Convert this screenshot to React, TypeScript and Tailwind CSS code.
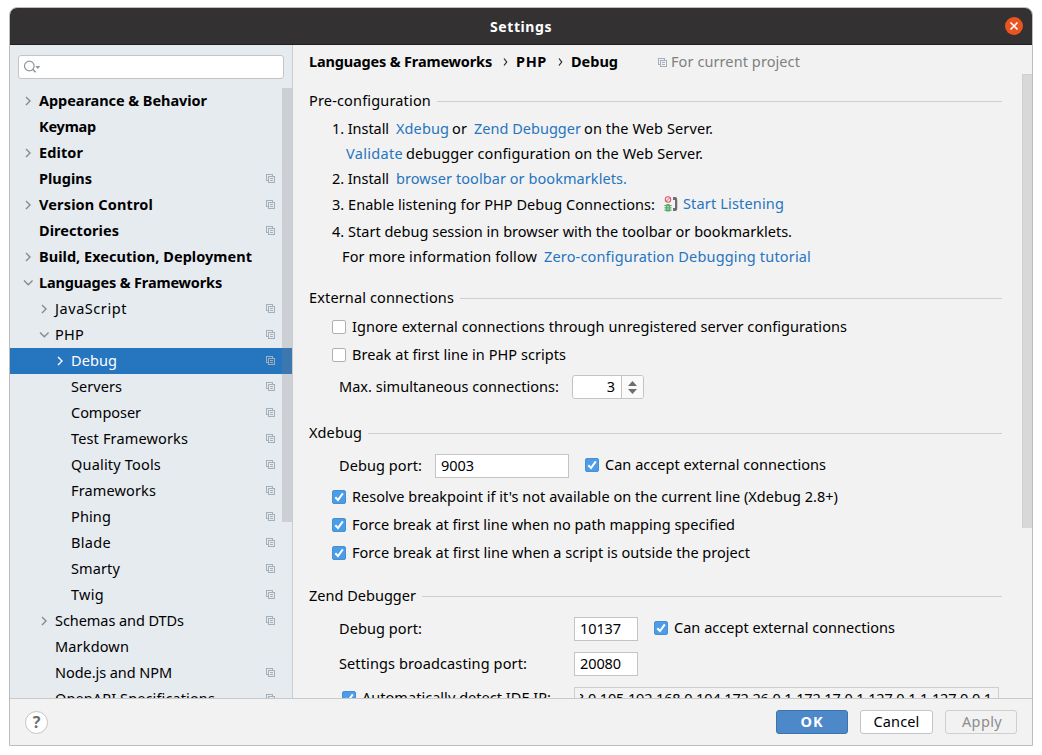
import { useLayoutEffect, useRef, useState } from 'react';
import type { ReactNode } from 'react';

/** Text tracked so that it spans exactly `w` pixels. */
function Fit({ w, children, className = 'pb-0.5' }: { w: number; children: string; className?: string }) {
  const ref = useRef<HTMLSpanElement>(null);
  const [tracking, setTracking] = useState(0);
  useLayoutEffect(() => {
    if (ref.current) {
      const natural = ref.current.getBoundingClientRect().width - tracking * children.length;
      setTracking((w - natural) / children.length);
    }
  }, [w, children]);
  return (
    <span ref={ref} className={`inline-block flex-none whitespace-pre ${className}`} style={{ letterSpacing: tracking }}>
      {children}
    </span>
  );
}

function ProjectIcon() {
  return (
    <svg width="9" height="9" viewBox="0 0 9 9" className="flex-none" fill="none" stroke="#a3b0b9" shapeRendering="crispEdges">
      <path d="M2 6.5H0.5V0.5H6.5V2" />
      <rect x="2.5" y="2.5" width="6" height="6" />
      <path d="M4 4.5H7M4 6.5H7" />
    </svg>
  );
}

function Arrow({ open, light }: { open?: boolean; light?: boolean }) {
  return (
    <svg width="10" height="10" viewBox="0 0 10 10" fill="none" stroke={light ? '#ffffff' : '#868a8c'} strokeWidth="1.4">
      <path d={open ? 'M1 2.5L5.3 6.8L9.6 2.5' : 'M3 1L7 5L3 9'} />
    </svg>
  );
}

type Node = { t: string; w: number; l: number; a?: 'r' | 'd'; p?: boolean; sel?: boolean };

const nodes: Node[] = [
  { t: 'Appearance & Behavior', w: 168, l: 0, a: 'r' },
  { t: 'Keymap', w: 57, l: 0 },
  { t: 'Editor', w: 44, l: 0, a: 'r' },
  { t: 'Plugins', w: 53, l: 0, p: true },
  { t: 'Version Control', w: 114, l: 0, a: 'r', p: true },
  { t: 'Directories', w: 80, l: 0, p: true },
  { t: 'Build, Execution, Deployment', w: 213, l: 0, a: 'r' },
  { t: 'Languages & Frameworks', w: 183, l: 0, a: 'd' },
  { t: 'JavaScript', w: 72, l: 1, a: 'r', p: true },
  { t: 'PHP', w: 29, l: 1, a: 'd', p: true },
  { t: 'Debug', w: 46, l: 2, a: 'r', p: true, sel: true },
  { t: 'Servers', w: 51, l: 2, p: true },
  { t: 'Composer', w: 70, l: 2, p: true },
  { t: 'Test Frameworks', w: 117, l: 2, p: true },
  { t: 'Quality Tools', w: 90, l: 2, p: true },
  { t: 'Frameworks', w: 85, l: 2, p: true },
  { t: 'Phing', w: 40, l: 2, p: true },
  { t: 'Blade', w: 40, l: 2, p: true },
  { t: 'Smarty', w: 49, l: 2, p: true },
  { t: 'Twig', w: 33, l: 2, p: true },
  { t: 'Schemas and DTDs', w: 129, l: 1, a: 'r', p: true },
  { t: 'Markdown', w: 74, l: 1 },
  { t: 'Node.js and NPM', w: 117, l: 1, p: true },
  { t: 'OpenAPI Specifications', w: 160, l: 1, p: true },
];

const indent = ['pl-[13px]', 'pl-[29px]', 'pl-[45px]'];

function TreeRow({ n }: { n: Node }) {
  return (
    <div className={`flex h-[26px] flex-none items-center pr-[17px] ${indent[n.l]} ${n.sel ? 'bg-[#2675bf] text-white' : ''}`}>
      <span className="flex w-4 flex-none">{n.a && <Arrow open={n.a === 'd'} light={n.sel} />}</span>
      <Fit w={n.w} className={n.l === 0 ? 'pb-0.5 font-bold' : 'pb-0.5'}>{n.t}</Fit>
      <span className="ml-auto flex pb-px">{n.p && <ProjectIcon />}</span>
    </div>
  );
}

function Section({ w, children, className = '' }: { w: number; children: string; className?: string }) {
  return (
    <div className={`flex h-[25px] flex-none items-center gap-1.5 pr-[30px] ${className}`}>
      <Fit w={w} className="pb-[3px]">{children}</Fit>
      <span className="h-px flex-1 bg-[#cfcfcf]" />
    </div>
  );
}

function Check({ on, w, children, className = '' }: { on?: boolean; w: number; children: string; className?: string }) {
  return (
    <label className={`flex flex-none items-center gap-1.5 ${className}`}>
      {on ? (
        <svg width="14" height="14" viewBox="0 0 14 14" className="flex-none">
          <rect x="0.5" y="0.5" width="13" height="13" rx="1.5" fill="#4d9de6" stroke="#4390d6" />
          <path d="M3.3 7.2L6 10L10.8 3.4" fill="none" stroke="#fff" strokeWidth="2" />
        </svg>
      ) : (
        <span className="size-3.5 flex-none rounded-[2px] border border-[#b0b0b0] bg-white" />
      )}
      <Fit w={w}>{children}</Fit>
    </label>
  );
}

function Link({ w, children }: { w: number; children: string }) {
  return <Fit w={w} className="pb-0.5 text-[#2675bf]">{children}</Fit>;
}

function Field({ w, children, className = '' }: { w: number; children: string; className?: string }) {
  return (
    <div className={`flex h-6 flex-none items-center border border-[#c4c4c4] bg-white pl-[5px] ${className}`}>
      <Fit w={w}>{children}</Fit>
    </div>
  );
}

function Line({ children, className = '' }: { children: ReactNode; className?: string }) {
  return <div className={`flex flex-none items-center ${className}`}>{children}</div>;
}

function ListenIcon() {
  return (
    <svg width="14" height="16" viewBox="0 0 14 16" className="flex-none" fill="none">
      <circle cx="4" cy="3.5" r="2.7" stroke="#e05565" strokeWidth="1.1" />
      <path d="M2.3 5.2L5.7 1.8" stroke="#e05565" />
      <path d="M2.5 8H5.5V9.5H6.3V14.2L5.5 15.4H2.5L1.7 14.2V9.5H2.5Z" fill="#59a869" />
      <path d="M0.3 9.5H7.7M0.3 11.8H7.7M0.3 14.2H7.7" stroke="#59a869" />
      <path d="M3 10.7H5M3 13H5" stroke="#f2f2f2" strokeWidth="0.7" />
      <path d="M9 1H12C13 2 13.3 3 13.3 4.5V11.5C13.3 13 13 14 12 15H9V12H11V4H9Z" fill="#6e6e6e" />
    </svg>
  );
}

export default function App() {
  return (
    <div className="h-[755px] w-[1042px] overflow-hidden bg-white pt-[7px] pl-[9px] font-['Noto_Sans',sans-serif] text-[14.5px] leading-[20px] text-black">
      <div className="flex h-[739px] w-[1024px] flex-col overflow-hidden rounded-t-[8px] border border-[#bdbdbd] bg-[#f2f2f2]">
        <header className="grid h-[37px] flex-none grid-cols-[1fr_auto_1fr] items-center border-b border-[#1f1f1f] bg-[#333132] text-white">
          <span />
          <Fit w={62} className="pt-0.5 text-[14px] font-bold">Settings</Fit>
          <span className="mr-[9px] justify-self-end">
            <svg width="18" height="18" viewBox="0 0 18 18">
              <circle cx="9" cy="9" r="9" fill="#e95420" />
              <path d="M5.5 5.5L12.5 12.5M12.5 5.5L5.5 12.5" stroke="#fff" strokeWidth="1.6" />
            </svg>
          </span>
        </header>

        <div className="flex h-[653px] flex-none">
          <aside className="relative flex w-[283px] flex-none flex-col overflow-hidden border-r border-[#c9cdd1] bg-[#e6ebf0]">
            <div className="mx-2 mt-[10px] mb-[9px] flex h-6 flex-none items-center rounded-[3px] border border-[#c4c4c4] bg-white pl-[5px]">
              <svg width="17" height="14" viewBox="0 0 17 14" fill="none">
                <circle cx="5.3" cy="6" r="4.8" stroke="#8f979d" strokeWidth="1.2" />
                <path d="M8.6 9.3L11.6 12.3" stroke="#8f979d" strokeWidth="1.6" />
                <path d="M11.3 6H16.3L13.8 9Z" fill="#8f979d" />
              </svg>
            </div>
            {nodes.map((n) => <TreeRow key={n.t} n={n} />)}
            <div className="absolute top-[43px] right-0 h-[434px] w-2.5 bg-[#80808040]" />
          </aside>

          <main className="relative flex flex-1 flex-col overflow-hidden pl-4">
            <div className="flex h-[34px] flex-none items-center">
              <Fit w={183} className="pb-0.5 font-bold">Languages & Frameworks</Fit>
              <svg width="5" height="8" viewBox="0 0 5 8" className="mr-[8px] ml-[11px]" fill="none" stroke="#222" strokeWidth="1.2"><path d="M1 0.5L3.7 4L1 7.5" /></svg>
              <Fit w={31} className="pb-0.5 font-bold">PHP</Fit>
              <svg width="5" height="8" viewBox="0 0 5 8" className="mr-2 ml-[11px]" fill="none" stroke="#222" strokeWidth="1.2"><path d="M1 0.5L3.7 4L1 7.5" /></svg>
              <Fit w={47} className="pb-0.5 font-bold">Debug</Fit>
              <span className="mr-1 ml-[40px]"><ProjectIcon /></span>
              <Fit w={129} className="pb-0.5 text-[#808080]">For current project</Fit>
            </div>

            <Section w={122} className="mt-[10px]">Pre-configuration</Section>
            <Line className="mt-0.5 h-[25px] pl-[23px]">
              <Fit w={57}>1. Install</Fit>
              <span className="w-[7px]" />
              <Link w={53}>Xdebug</Link>
              <span className="w-[3px]" />
              <Fit w={15}>or</Fit>
              <span className="w-[7px]" />
              <Link w={107}>Zend Debugger</Link>
              <span className="w-[3px]" />
              <Fit w={129}>on the Web Server.</Fit>
            </Line>
            <Line className="h-[25px] gap-[3px] pl-[37px]">
              <Link w={57}>Validate</Link>
              <Fit w={297}>debugger configuration on the Web Server.</Fit>
            </Line>
            <Line className="h-[25px] gap-[7px] pl-[23px]">
              <Fit w={57}>2. Install</Fit>
              <Link w={231}>browser toolbar or bookmarklets.</Link>
            </Line>
            <Line className="h-7 pl-[23px]">
              <Fit w={323}>3. Enable listening for PHP Debug Connections:</Fit>
              <span className="mr-[5px] ml-[9px] -mt-0.5"><ListenIcon /></span>
              <span className="-mt-0.5 flex"><Link w={101}>Start Listening</Link></span>
            </Line>
            <Line className="h-[25px] pl-[23px]">
              <Fit w={460}>4. Start debug session in browser with the toolbar or bookmarklets.</Fit>
            </Line>
            <Line className="h-[25px] gap-[7px] pl-[33px]">
              <Fit w={195}>For more information follow</Fit>
              <Link w={267}>Zero-configuration Debugging tutorial</Link>
            </Line>

            <Section w={145} className="mt-[17px]">External connections</Section>
            <Check w={495} className="mt-0.5 h-7 pl-[23px]">Ignore external connections through unregistered server configurations</Check>
            <Check w={214} className="h-7 pl-[23px]">Break at first line in PHP scripts</Check>
            <Line className="h-9 pl-[30px]">
              <Fit w={220}>Max. simultaneous connections:</Fit>
              <div className="ml-[13px] flex h-6 w-[72px] overflow-hidden rounded-[3px] border border-[#c4c4c4] bg-white">
                <span className="flex w-[49px] items-center justify-end border-r border-[#c4c4c4] pr-1.5 pb-0.5">3</span>
                <span className="flex flex-1 items-center justify-center bg-[#fafafa]">
                  <svg width="9" height="13" viewBox="0 0 9 13" fill="#6e6e6e"><path d="M0 5L4.5 0L9 5ZM0 8L4.5 13L9 8Z" /></svg>
                </span>
              </div>
            </Line>

            <Section w={53} className="mt-4">Xdebug</Section>
            <Line className="mt-[3px] h-[34px] pl-[30px]">
              <Fit w={83}>Debug port:</Fit>
              <Field w={33} className="ml-[13px] w-[134px]">9003</Field>
              <Check on w={221} className="-mt-0.5 ml-4">Can accept external connections</Check>
            </Line>
            <Check on w={486} className="h-7 pl-[23px]">Resolve breakpoint if it's not available on the current line (Xdebug 2.8+)</Check>
            <Check on w={383} className="h-7 pl-[23px]">Force break at first line when no path mapping specified</Check>
            <Check on w={398} className="h-7 pl-[23px]">Force break at first line when a script is outside the project</Check>

            <Section w={107} className="mt-[17px]">Zend Debugger</Section>
            <Line className="mt-2 h-6 pl-[30px]">
              <span className="flex w-[235px]"><Fit w={83}>Debug port:</Fit></span>
              <Field w={41} className="w-16">10137</Field>
              <Check on w={221} className="-mt-0.5 ml-4">Can accept external connections</Check>
            </Line>
            <Line className="mt-[11px] h-6 pl-[30px]">
              <span className="flex w-[235px]"><Fit w={188}>Settings broadcasting port:</Fit></span>
              <Field w={41} className="w-16">20080</Field>
            </Line>
            <Line className="mt-[11px] h-6 pl-[33px]">
              <span className="-mt-0.5 flex w-[232px]"><Check on w={189}>Automatically detect IDE IP:</Check></span>
              <div className="flex h-6 w-[425px] items-center border border-[#cfcfcf] px-[5px]">
                <span className="flex w-full justify-end overflow-hidden pr-px">
                  <Fit w={416}>3.0.105,192.168.0.104,172.26.0.1,172.17.0.1,127.0.1.1,127.0.0.1</Fit>
                </span>
              </div>
            </Line>
            <div className="absolute top-[29px] right-0 h-[454px] w-2.5 border-t border-l border-[#cfcfcf] bg-[#d8d8d8]" />
          </main>
        </div>

        <footer className="flex flex-1 items-center border-t border-[#c9c9c9] pr-[15px] pl-[15px]">
          <span className="flex size-[23px] items-center justify-center rounded-full border border-[#c4c4c4] bg-white text-[16px] font-bold text-[#6e6e6e]">?</span>
          <button className="ml-auto flex h-6 w-[72px] items-center justify-center rounded-[3px] border border-[#3c74b0] bg-[#4d89c9] font-bold text-white"><Fit w={23}>OK</Fit></button>
          <button className="ml-3 flex h-6 w-[73px] items-center justify-center rounded-[3px] border border-[#c4c4c4] bg-white"><Fit w={46}>Cancel</Fit></button>
          <button className="ml-3 flex h-6 w-[72px] items-center justify-center rounded-[3px] border border-[#cfcfcf] pl-0.5 text-[#8c8c8c]"><Fit w={40}>Apply</Fit></button>
        </footer>
      </div>
    </div>
  );
}
